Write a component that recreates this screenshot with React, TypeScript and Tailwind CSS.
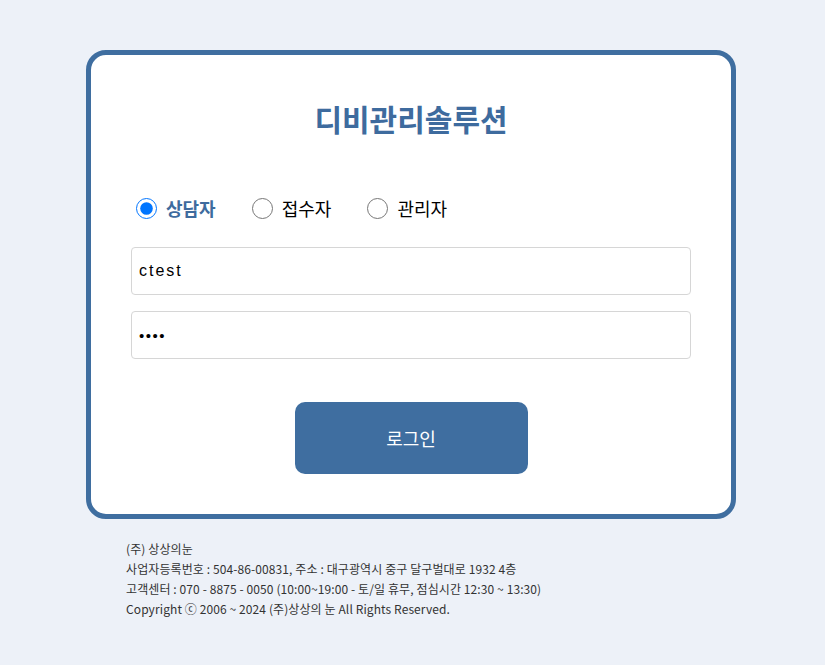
import React from "react";

export default function App() {
  return (
    <div
      className="min-h-[665px] w-full bg-[#edf1f8] pt-[50px]"
      style={{ fontFamily: '"Noto Sans CJK KR", "Noto Sans", sans-serif' }}
    >
      <div className="ml-[86px] w-[650px]">
        <div className="rounded-[20px] border-[5px] border-[#3f6ea0] bg-white px-[40px] pb-[40px] pt-[43px]">
          <h1 className="text-center text-[30px] font-bold leading-[40px] text-[#3e6b9e]">
            디비관리솔루션
          </h1>
          <div className="mt-[58px] flex h-[24px] items-center pl-[5px]">
            <label className="flex items-center">
              <input
                type="radio"
                name="role"
                defaultChecked
                className="m-0 h-[21px] w-[21px] accent-[#0075ff]"
              />
              <span className="ml-[9px] text-[18px] font-bold text-[#3e6b9e]">상담자</span>
            </label>
            <label className="ml-[36px] flex items-center">
              <input type="radio" name="role" className="m-0 h-[21px] w-[21px]" />
              <span className="ml-[9px] text-[18px] text-black">접수자</span>
            </label>
            <label className="ml-[36px] flex items-center">
              <input type="radio" name="role" className="m-0 h-[21px] w-[21px]" />
              <span className="ml-[9px] text-[18px] text-black">관리자</span>
            </label>
          </div>
          <div className="mt-[27px] flex flex-col gap-[16px]">
            <input
              type="text"
              defaultValue="ctest"
              className="h-[48px] w-full rounded-[4px] border border-[#d6d6d6] px-[7px] text-[16px] tracking-[2px] text-black outline-none"
              style={{ fontFamily: '"Liberation Sans", Arial, sans-serif' }}
            />
            <input
              type="password"
              defaultValue="1234"
              className="h-[48px] w-full rounded-[4px] border border-[#d6d6d6] px-[7px] text-[15px] tracking-[1.5px] text-black outline-none"
              style={{ fontFamily: '"Liberation Sans", Arial, sans-serif' }}
            />
          </div>
          <div className="mt-[43px] flex justify-center">
            <button className="h-[72px] w-[233px] rounded-[10px] bg-[#3f6ea0] text-[18px] text-white">
              로그인
            </button>
          </div>
        </div>
        <div className="mt-[20px] pl-[40px] text-[12px] leading-[20px] tracking-[0.1px] text-[#333]">
          <p>(주) 상상의눈</p>
          <p>사업자등록번호 : 504-86-00831, 주소 : 대구광역시 중구 달구벌대로 1932 4층</p>
          <p>고객센터 : 070 - 8875 - 0050 (10:00~19:00 - 토/일 휴무, 점심시간 12:30 ~ 13:30)</p>
          <p>Copyright ⓒ 2006 ~ 2024 (주)상상의 눈 All Rights Reserved.</p>
        </div>
      </div>
    </div>
  );
}
